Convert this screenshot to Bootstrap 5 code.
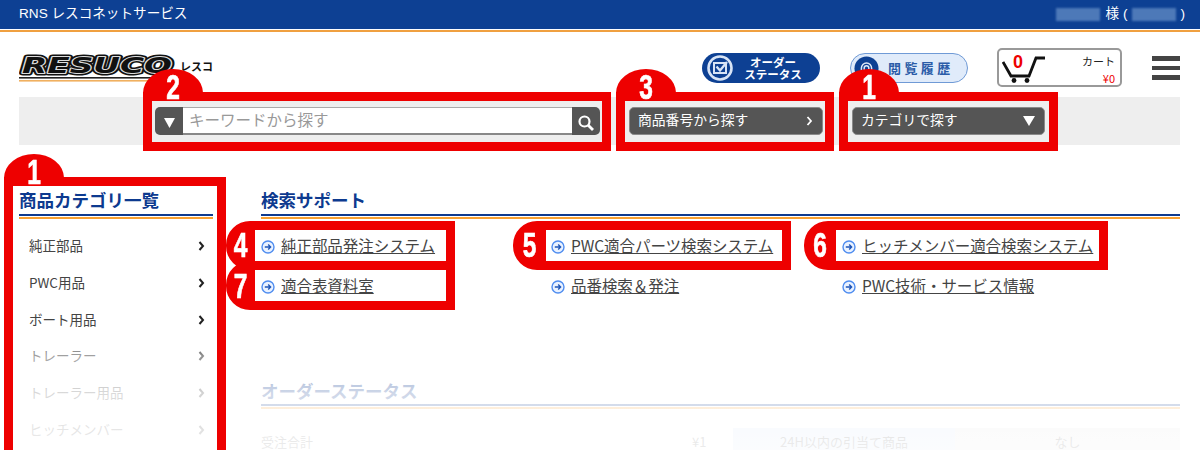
<!DOCTYPE html>
<html lang="ja">
<head>
<meta charset="UTF-8">
<title>RNS レスコネットサービス</title>
<link href="https://cdn.jsdelivr.net/npm/bootstrap@5.3.0/dist/css/bootstrap.min.css" rel="stylesheet">
<style>
body { width: 1200px; height: 450px; overflow: hidden; position: relative; background: #fff; color: #444; font-family: "Noto Sans CJK JP", "Liberation Sans", sans-serif; font-size: 13px; }
.top-strip { height: 29px; background: #0d4093; color: #fff; padding: 0 15px 0 19px; font-size: 13.6px; font-family: "Liberation Sans", "Noto Sans CJK JP", sans-serif; }
.top-line { height: 2px; margin-top: 1px; background: #f0a040; }
.masked { display: inline-block; width: 44px; height: 13px; background: #4d79b8; filter: blur(1px); }
.user-name { margin: 0 1px 0 2px; }
.site-head { height: 65px; padding: 16px 20px 0 19px; }
.logo-kana { font-size: 11px; font-weight: 700; color: #111; line-height: 11px; margin: 13px 0 0 5px; }
.pill { width: 118px; height: 30px; border-radius: 15px; font-weight: 700; line-height: 12.5px; }
.pill-order { background: #0d4093; color: #fff; font-size: 11.5px; text-align: center; }
.pill-order span span { display: block; }
.pill-history { background: #e0ebfa; border: 1px solid #6f9ad6; color: #2b5ca8; font-size: 13px; letter-spacing: 3.4px; margin-right: -1px; }
.history-label { margin-left: 9px; }
.cart-box { width: 125px; height: 39px; border: 2px solid #999; border-radius: 5px; position: relative; font-size: 11px; line-height: 13px; color: #222; }
.cart-count { position: absolute; left: 14px; top: 2px; color: #e00; font: 700 18px/20px "Liberation Sans", sans-serif; }
.cart-price { color: #e00; }
.burger { width: 28px; gap: 5px; }
.burger span { height: 4.6px; background: #444; }
.search-band { height: 48px; margin: 0 20px 0 19px; background: #eee; padding: 10px 0 0 136px; gap: 29px; }
.search-group { width: 445px; height: 28px; }
.search-group .btn { width: 28px; height: 28px; padding: 0 0 2px; background: #555; border: 0; border-radius: 5px; color: #fff; }
.search-group .form-control { height: 28px; padding: 0 7px 4px; border: 0; border-bottom: 2px solid #888; border-top: 1px solid #aaa; border-radius: 0; font-size: 15.5px; background: #fff; }
.search-group .form-control::placeholder { color: #999; }
.tool-btn { height: 28px; padding: 0 9px 4px 8px; background: #555; color: #fff; border: 1px solid #8a8a8a; border-radius: 5px; font-size: 13.8px; box-sizing: border-box; }
.tool-btn:hover { background: #555; color: #fff; }
.tool-btn svg { margin-top: 4px; }
.btn-number { width: 194px; }
.btn-category { width: 193px; }
.page-body { padding: 0 20px 0 19px; }
.side-col { width: 194px; margin-right: 48px; flex: none; }
.main-col { flex: 1; }
.sect-title { height: 71px; padding-top: 41px; margin: 0; font-size: 17.5px; font-weight: 700; line-height: 28px; color: #0d3a8f; border-bottom: 2px solid #0d3a8f; box-shadow: 0 1px 0 #fff, 0 3px 0 #f8a030; }
.cat-list { margin-top: 12px; padding: 0 8px 0 10px; }
.cat-list li { height: 36.7px; color: #444; font-size: 13.5px; }
.cat-list li span { padding-bottom: 2px; }
.link-grid { display: grid; grid-template-columns: 290px 291px 291px; grid-auto-rows: 40px; margin-top: 11px; }
.link-grid a { color: #444; font-size: 15.5px; line-height: 20px; padding-bottom: 4px; white-space: nowrap; letter-spacing: -.05px; }
.link-icon { margin-right: 6px; flex: none; }
.status-title { height: 28px; padding: 0; margin-top: 71px; line-height: 25px; }
.status-row { margin-top: 22px; height: 22px; font-size: 13px; color: #444; line-height: 20px; }
.status-label { width: 431px; }
.status-price { width: 16px; margin-right: 25px; }
.status-cell { width: 222px; background: #d4e2f8; }
.status-cell-b { width: 225px; background: #e4e4e4; }
.fade-over { position: absolute; left: 0; right: 0; top: 330px; bottom: 0; z-index: 5; background: linear-gradient(180deg, rgba(255,255,255,0) 0, rgba(255,255,255,.5) 26px, rgba(255,255,255,.8) 63px, rgba(255,255,255,.9) 120px); pointer-events: none; }
.anno { position: absolute; z-index: 10; border: 9px solid #ee0000; }
.anno-tab::before { content: ""; position: absolute; left: -9px; top: -32px; width: 60px; height: 24px; background: #ee0000; border-radius: 30px 30px 0 0 / 24px 24px 0 0; }
.anno-num { position: absolute; color: #fff; font: 700 35px/35px "Liberation Sans", sans-serif; -webkit-text-stroke: .7px #fff; text-align: center; transform: scaleX(.7); }
.anno-tab .anno-num { left: -9px; top: -32px; width: 60px; }
.anno-link { height: 49px; top: 221px; border-radius: 24px 0 0 24px; }
.anno-link .anno-num { top: -3px; }
.a-search { left: 143px; top: 92px; width: 468px; height: 59px; }
.a-number { left: 616px; top: 92px; width: 218px; height: 59px; }
.a-category { left: 839px; top: 92px; width: 219px; height: 59px; }
.a-side { left: 4px; top: 177px; width: 222px; height: 273px; border-bottom: 0; }
.a-parts { left: 226px; width: 229px; border-left-width: 29px; }
.a-parts .anno-num, .a-chart .anno-num { left: -29px; width: 29px; }
.a-chart { left: 226px; width: 229px; border-left-width: 29px; top: 261px; }
.a-chart .anno-num { top: -2px; }
.a-pwc { left: 513px; width: 278px; border-left-width: 33px; }
.a-pwc .anno-num { left: -33px; width: 33px; }
.a-hitch { left: 804px; width: 304px; border-left-width: 32px; }
.a-hitch .anno-num { left: -32px; width: 32px; }
</style>
</head>
<body>

<!-- top strip -->
<div class="top-strip d-flex align-items-center">
  <span>RNS レスコネットサービス</span>
  <span class="ms-auto d-flex align-items-center gap-1">
    <span class="masked"></span><span class="user-name">様 (</span><span class="masked"></span><span>)</span>
  </span>
</div>
<div class="top-line"></div>

<!-- logo and header buttons -->
<div class="site-head d-flex">
  <svg width="156" height="36" viewBox="0 0 156 36">
    <defs>
      <text id="logoWord" x="3" y="25" textLength="150" lengthAdjust="spacingAndGlyphs" font-family="DejaVu Sans" font-weight="700" font-style="italic" font-size="22">RESUCO</text>
    </defs>
    <use href="#logoWord" fill="#111" stroke="#111" stroke-width="5" stroke-linejoin="round"/>
    <use href="#logoWord" fill="#111" stroke="#ddd" stroke-width="2" stroke-linejoin="round"/>
    <use href="#logoWord" fill="#111"/>
    <rect x="0" y="29" width="156" height="1.6" fill="#222"/>
    <rect x="0" y="32" width="156" height="1.6" fill="#f0b060"/>
  </svg>
  <span class="logo-kana">レスコ</span>

  <div class="ms-auto d-flex align-items-start" style="gap:30px">
    <a class="pill pill-order d-flex align-items-center text-decoration-none mt-1 position-relative" style="top:1px" href="#">
      <svg class="ms-1" width="28" height="28" viewBox="0 0 28 28">
        <circle cx="14" cy="14" r="11.5" fill="#0d4093" stroke="#d8e4f6" stroke-width="2.6"/>
        <rect x="8" y="9" width="12" height="10" fill="none" stroke="#d8e4f6" stroke-width="2"/>
        <path d="M10.5 12.5l3.5 4 7-8.5" fill="none" stroke="#d8e4f6" stroke-width="2.4"/>
      </svg>
      <span class="flex-grow-1 pe-2"><span>オーダー</span><span>ステータス</span></span>
    </a>
    <a class="pill pill-history d-flex align-items-center text-decoration-none mt-1 position-relative" style="top:1px" href="#">
      <svg style="margin-left:3px" width="25" height="25" viewBox="0 0 27 27">
        <circle cx="13.5" cy="13.5" r="13" fill="#0d4093"/>
        <path d="M8 22v-9a5.5 5.5 0 0 1 11 0v9M11 22v-9a2.5 2.5 0 0 1 5 0v9" fill="none" stroke="#dfe9f8" stroke-width="1.6"/>
      </svg>
      <span class="history-label">閲覧履歴</span>
    </a>
    <a class="cart-box d-block text-decoration-none" href="#">
      <svg class="position-absolute" style="left:3px;top:6px" width="46" height="28" viewBox="0 0 46 28">
        <path d="M1 6l8 14h18l7-18h9" fill="none" stroke="#111" stroke-width="2.8"/>
        <circle cx="12" cy="24.5" r="2.4" fill="#111"/>
        <circle cx="25" cy="24.5" r="2.4" fill="#111"/>
      </svg>
      <span class="cart-count">0</span>
      <span class="position-absolute end-0 text-end" style="top:5px;padding-right:5px">カート<br><span class="cart-price d-block mt-1">¥0</span></span>
    </a>
    <div class="burger d-flex flex-column pt-2"><span></span><span></span><span></span></div>
  </div>
</div>

<!-- search band -->
<div class="search-band d-flex">
  <div class="input-group search-group flex-nowrap">
    <button class="btn" type="button" aria-label="検索対象">
      <svg width="11" height="10" viewBox="0 0 11 10"><path d="M0 0h11L5.5 10z" fill="#fff"/></svg>
    </button>
    <input class="form-control" type="text" placeholder="キーワードから探す">
    <button class="btn" type="button" aria-label="検索">
      <svg width="18" height="18" viewBox="0 0 18 18"><circle cx="7.5" cy="7.5" r="5" fill="none" stroke="#fff" stroke-width="2.2"/><path d="M11 11l5 5" stroke="#fff" stroke-width="2.8"/></svg>
    </button>
  </div>
  <button class="btn tool-btn btn-number d-flex align-items-center justify-content-between" type="button">
    商品番号から探す
    <svg width="7" height="10" viewBox="0 0 7 10"><path d="M1.5 1l3.5 4-3.5 4" fill="none" stroke="#fff" stroke-width="1.8"/></svg>
  </button>
  <button class="btn tool-btn btn-category d-flex align-items-center justify-content-between" type="button">
    カテゴリで探す
    <svg width="12" height="10" viewBox="0 0 12 10"><path d="M0 0h12L6 10z" fill="#fff"/></svg>
  </button>
</div>

<div class="page-body d-flex">
  <!-- category side list -->
  <div class="side-col">
    <h2 class="sect-title">商品カテゴリ一覧</h2>
    <ul class="cat-list list-unstyled" id="catList"></ul>
  </div>

  <!-- main column -->
  <div class="main-col">
    <h2 class="sect-title">検索サポート</h2>
    <div class="link-grid" id="linkGrid"></div>
    <h2 class="sect-title status-title">オーダーステータス</h2>
    <div class="status-row d-flex align-items-stretch">
      <span class="status-label pt-1">受注合計</span>
      <span class="status-price pt-1">¥1</span>
      <span class="status-cell text-center pt-1">24H以内の引当て商品</span>
      <span class="status-cell-b text-center pt-1">なし</span>
    </div>
  </div>
</div>

<div class="fade-over"></div>

<!-- red annotation frames -->
<div class="anno anno-tab a-search"><span class="anno-num">2</span></div>
<div class="anno anno-tab a-number"><span class="anno-num">3</span></div>
<div class="anno anno-tab a-category"><span class="anno-num">1</span></div>
<div class="anno anno-tab a-side"><span class="anno-num">1</span></div>
<div class="anno anno-link a-chart"><span class="anno-num">7</span></div>
<div class="anno anno-link a-parts"><span class="anno-num">4</span></div>
<div class="anno anno-link a-pwc"><span class="anno-num">5</span></div>
<div class="anno anno-link a-hitch"><span class="anno-num">6</span></div>

<script src="https://cdn.jsdelivr.net/npm/bootstrap@5.3.0/dist/js/bootstrap.bundle.min.js"></script>
<script>
const categories = ["純正部品", "PWC用品", "ボート用品", "トレーラー", "トレーラー用品", "ヒッチメンバー"];
const links = [
    "純正部品発注システム", "PWC適合パーツ検索システム", "ヒッチメンバー適合検索システム",
    "適合表資料室", "品番検索＆発注", "PWC技術・サービス情報"
];

const chevron = '<svg width="7" height="10" viewBox="0 0 7 10"><path d="M1.5 1l3.5 4-3.5 4" fill="none" stroke="#222" stroke-width="2"/></svg>';
const circleArrow = '<svg class="link-icon" width="14" height="14" viewBox="0 0 14 14"><circle cx="7" cy="7" r="6" fill="#eaf2ff" stroke="#4f8df0" stroke-width="1.4"/><path d="M3.8 7h5.6M7.2 4.6L9.6 7 7.2 9.4" fill="none" stroke="#1f56b8" stroke-width="1.4"/></svg>';

document.getElementById("catList").innerHTML = categories.map(name =>
    `<li class="d-flex align-items-center justify-content-between"><span>${name}</span>${chevron}</li>`).join("");

document.getElementById("linkGrid").innerHTML = links.map(name =>
    `<div class="d-flex align-items-center">${circleArrow}<a href="#">${name}</a></div>`).join("");
</script>
</body>
</html>
